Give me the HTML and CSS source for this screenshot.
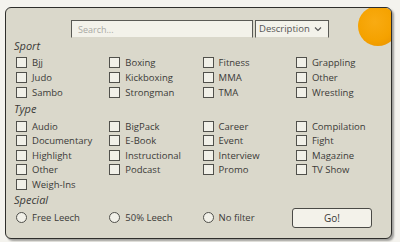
FILE: index.html
```html
<!DOCTYPE html>
<html>
<head>
<meta charset="utf-8">
<link rel="stylesheet" href="styles.css">
</head>
<body>
<form class="panel">
  <div class="blob"></div>
  <div class="search-row">
    <input class="search" type="text" placeholder="Search...">
    <div class="select">Description <svg class="chev" width="8" height="6" viewBox="0 0 8 6"><path d="M1 1.5 L4 4.5 L7 1.5" fill="none" stroke="#555" stroke-width="1.1"/></svg></div>
  </div>
  <div class="heading h-sport">Sport</div>
  <div class="grid sport">
    <label class="opt"><span class="box"></span>Bjj</label>
    <label class="opt"><span class="box"></span>Boxing</label>
    <label class="opt"><span class="box"></span>Fitness</label>
    <label class="opt"><span class="box"></span>Grappling</label>
    <label class="opt"><span class="box"></span>Judo</label>
    <label class="opt"><span class="box"></span>Kickboxing</label>
    <label class="opt"><span class="box"></span>MMA</label>
    <label class="opt"><span class="box"></span>Other</label>
    <label class="opt"><span class="box"></span>Sambo</label>
    <label class="opt"><span class="box"></span>Strongman</label>
    <label class="opt"><span class="box"></span>TMA</label>
    <label class="opt"><span class="box"></span>Wrestling</label>
  </div>
  <div class="heading h-type">Type</div>
  <div class="grid type">
    <label class="opt"><span class="box"></span>Audio</label>
    <label class="opt"><span class="box"></span>BigPack</label>
    <label class="opt"><span class="box"></span>Career</label>
    <label class="opt"><span class="box"></span>Compilation</label>
    <label class="opt"><span class="box"></span>Documentary</label>
    <label class="opt"><span class="box"></span>E-Book</label>
    <label class="opt"><span class="box"></span>Event</label>
    <label class="opt"><span class="box"></span>Fight</label>
    <label class="opt"><span class="box"></span>Highlight</label>
    <label class="opt"><span class="box"></span>Instructional</label>
    <label class="opt"><span class="box"></span>Interview</label>
    <label class="opt"><span class="box"></span>Magazine</label>
    <label class="opt"><span class="box"></span>Other</label>
    <label class="opt"><span class="box"></span>Podcast</label>
    <label class="opt"><span class="box"></span>Promo</label>
    <label class="opt"><span class="box"></span>TV Show</label>
    <label class="opt"><span class="box"></span>Weigh-Ins</label>
  </div>
  <div class="heading h-special">Special</div>
  <div class="grid special">
    <label class="opt"><span class="radio"></span>Free Leech</label>
    <label class="opt"><span class="radio"></span>50% Leech</label>
    <label class="opt"><span class="radio"></span>No filter</label>
    <div class="go-cell"><button class="go" type="button">Go!</button></div>
  </div>
</form>
</body>
</html>
```
FILE: styles.css
```css
* { box-sizing: border-box; }
html, body { margin: 0; padding: 0; }
body {
  background: #f4f3ee;
  width: 400px;
  height: 242px;
  overflow: hidden;
  font-family: "Open Sans", "DejaVu Sans", sans-serif;
  color: #3a3a38;
}
.panel {
  position: relative;
  overflow: hidden;
  margin: 7px 0 0 5px;
  width: 387px;
  height: 232px;
  border: 1px solid #2e2e2b;
  border-radius: 6px;
  background: #dad8cb;
  box-shadow: 2px 2px 2px rgba(0,0,0,0.35);
  padding: 12px 6px 0 10px;
}
.blob {
  position: absolute;
  right: -7px;
  top: -2px;
  width: 40px;
  height: 40px;
  border-radius: 50%;
  background: radial-gradient(circle at 42% 40%, #f9ab12 0%, #f5a200 55%, #e58d00 100%);
}
.search-row {
  display: flex;
  gap: 2px;
  padding-left: 55px;
  height: 18px;
}
.search {
  width: 182px;
  height: 18px;
  border: 1px solid #5a5a55;
  border-bottom-color: #dad8cb;
  background: #f3f2ea;
  font: 9px "Open Sans", sans-serif;
  padding: 0 6px;
  outline: none;
}
.search::placeholder { color: #a9a9a4; }
.select {
  width: 74px;
  height: 18px;
  border: 1px solid #5a5a55;
  border-bottom-color: #dad8cb;
  background: #f3f2ea;
  font-size: 9.5px;
  line-height: 16px;
  padding-left: 3px;
  color: #555;
  display: flex;
  align-items: center;
  gap: 4px;
}
.heading {
  font-style: italic;
  font-size: 11px;
  line-height: 14px;
  color: #3a3a38;
  margin-left: -2px;
}
.h-sport { margin-top: 1px; }
.h-type { margin-top: 2px; }
.h-special { margin-top: 1px; }
.grid {
  display: grid;
  grid-template-columns: repeat(4, 93.3px);
  margin-top: 2px;
}
.sport { grid-auto-rows: 15px; }
.type { grid-auto-rows: 14.5px; margin-top: 3px; }
.special { grid-auto-rows: 22px; margin-top: 0; }
.opt {
  display: flex;
  align-items: center;
  font-size: 9.5px;
  color: #3a3a38;
  white-space: nowrap;
}
.box {
  width: 11px;
  height: 11px;
  border: 1px solid #50504b;
  background: #f1f0e8;
  margin-right: 5px;
  flex: none;
}
.radio {
  width: 11px;
  height: 11px;
  border: 1px solid #50504b;
  border-radius: 50%;
  background: #f1f0e8;
  margin-right: 5px;
  flex: none;
}
.go-cell { display: flex; align-items: center; margin-left: -4px; }
.go {
  width: 80px;
  height: 20px;
  border: 1px solid #4a4a46;
  border-radius: 3px;
  background: #f3f2ea;
  font: 10px "Open Sans", sans-serif;
  color: #3a3a38;
  padding: 0;
}
```
